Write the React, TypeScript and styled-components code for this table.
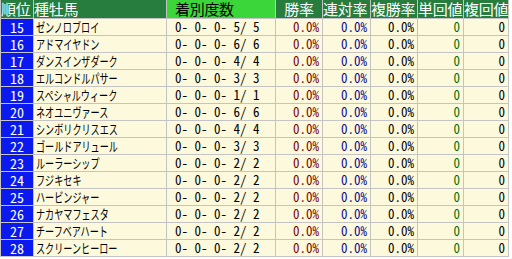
import React from "react";
import styled, { createGlobalStyle } from "styled-components";

const Global = createGlobalStyle`
  html, body { margin: 0; padding: 0; background: #ffffff; }
  body { font-family: "Noto Sans CJK JP", sans-serif; }
`;

const COLS = "32px 132px 108px 46px 47px 46px 45px 44px";

const Grid = styled.div`
  display: grid;
  width: max-content;
  grid-template-columns: ${COLS};
  grid-template-rows: 18px;
  grid-auto-rows: 16px;
  gap: 1px;
  padding: 0 1px 1px 1px;
  background: #c4c4c4;
`;

const Head = styled.div<{ $bright?: boolean; $align?: string }>`
  background: ${(p) => (p.$bright ? "#3ad63a" : "#267d3e")};
  color: ${(p) => (p.$bright ? "#000" : "#fff")};
  font-size: 15px;
  line-height: 18px;
  white-space: nowrap;
  letter-spacing: -0.3px;
  padding: 0 0 0 ${(p) => (p.$bright ? "8px" : "0")};
  text-align: ${(p) => p.$align || "left"};
`;

const Rank = styled.div`
  background: #0a1aef;
  color: #fff;
  font-family: "Noto Sans Mono CJK JP", "Liberation Mono", monospace;
  font-size: 14px;
  line-height: 16px;
  text-align: center;
`;

const Name = styled.div`
  background: #fcf9dc;
  color: #000;
  font-size: 13px;
  line-height: 16px;
  padding-left: 2px;
  white-space: nowrap;
`;

const NameText = styled.span`
  display: inline-block;
  transform: scaleX(0.7);
  transform-origin: left center;
`;

const Num = styled.div<{ $color?: string; $align?: string }>`
  background: #fcf9dc;
  color: ${(p) => p.$color || "#000"};
  font-family: "Noto Sans Mono CJK JP", "Liberation Mono", monospace;
  font-size: 13px;
  line-height: 16px;
  white-space: pre;
  text-align: ${(p) => p.$align || "right"};
  padding: 0 3px 0 8px;
`;

const rows: [number, string, string][] = [
  [15, "ゼンノロブロイ", "0- 0- 0- 5/ 5"],
  [16, "アドマイヤドン", "0- 0- 0- 6/ 6"],
  [17, "ダンスインザダーク", "0- 0- 0- 4/ 4"],
  [18, "エルコンドルパサー", "0- 0- 0- 3/ 3"],
  [19, "スペシャルウィーク", "0- 0- 0- 1/ 1"],
  [20, "ネオユニヴァース", "0- 0- 0- 6/ 6"],
  [21, "シンボリクリスエス", "0- 0- 0- 4/ 4"],
  [22, "ゴールドアリュール", "0- 0- 0- 3/ 3"],
  [23, "ルーラーシップ", "0- 0- 0- 2/ 2"],
  [24, "フジキセキ", "0- 0- 0- 2/ 2"],
  [25, "ハービンジャー", "0- 0- 0- 2/ 2"],
  [26, "ナカヤマフェスタ", "0- 0- 0- 2/ 2"],
  [27, "チーフベアハート", "0- 0- 0- 2/ 2"],
  [28, "スクリーンヒーロー", "0- 0- 0- 2/ 2"],
];

export default function App() {
  return (
    <>
      <Global />
      <Grid>
        <Head>順位</Head>
        <Head>種牡馬</Head>
        <Head $bright>着別度数</Head>
        <Head $align="center">勝率</Head>
        <Head>連対率</Head>
        <Head>複勝率</Head>
        <Head>単回値</Head>
        <Head>複回値</Head>
        {rows.map(([r, n, s]) => (
          <React.Fragment key={r}>
            <Rank>{r}</Rank>
            <Name>
              <NameText>{n}</NameText>
            </Name>
            <Num $align="left">{s}</Num>
            <Num $color="#7a0000">0.0%</Num>
            <Num $color="#0a0a90">0.0%</Num>
            <Num>0.0%</Num>
            <Num $color="#007000">0</Num>
            <Num>0</Num>
          </React.Fragment>
        ))}
      </Grid>
    </>
  );
}
